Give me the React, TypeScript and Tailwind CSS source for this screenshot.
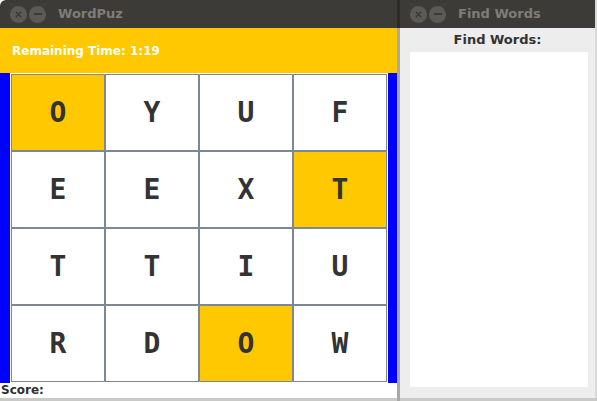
import React from "react";

const LETTERS = ["O", "Y", "U", "F", "E", "E", "X", "T", "T", "T", "I", "U", "R", "D", "O", "W"];
const PICKED = [0, 7, 14];

function TitleButtons() {
  return (
    <div className="flex items-center gap-[2px]">
      <div className="size-[17px] rounded-full bg-[#5b5a56] flex items-center justify-center">
        <svg width="7" height="7" viewBox="0 0 7 7">
          <path d="M1 1 L6 6 M6 1 L1 6" stroke="#3a3935" strokeWidth="1.5" />
        </svg>
      </div>
      <div className="size-[17px] rounded-full bg-[#5b5a56] flex items-center justify-center">
        <div className="w-[8px] h-[1.5px] bg-[#3a3935]" />
      </div>
    </div>
  );
}

function TitleBar({ title, rounded }: { title: string; rounded?: boolean }) {
  return (
    <div
      className={`h-[28px] shrink-0 bg-[#3c3b37] flex items-center pl-[10px] gap-[12px] ${rounded ? "rounded-tl-[6px]" : ""}`}
    >
      <TitleButtons />
      <span className="text-[13px] font-bold text-[#7f7d78] font-['DejaVu_Sans',sans-serif]">{title}</span>
    </div>
  );
}

export default function App() {
  return (
    <div className="w-[597px] h-[401px] overflow-hidden bg-[#c9c9c7] flex font-['DejaVu_Sans',sans-serif]">
      {/* main game window */}
      <div className="w-[397px] h-[398px] flex flex-col bg-white">
        <TitleBar title="WordPuz" rounded />
        <div className="h-[45px] bg-[#ffc800] flex items-center pl-[12px] text-white text-[12px] font-bold">
          Remaining Time: 1:19
        </div>
        <div className="h-[310px] flex">
          <div className="w-[10px] bg-[#0000ff]" />
          <div className="p-[1px] bg-white">
            <div className="grid grid-cols-4 w-[376px] h-[308px]">
              {LETTERS.map((l, i) => (
                <div
                  key={i}
                  className={`border border-[#7d8894] flex items-center justify-center text-[28px] font-bold text-[#333333] font-['DejaVu_Sans_Mono',monospace] ${
                    PICKED.includes(i) ? "bg-[#ffc800]" : "bg-white"
                  }`}
                >
                  {l}
                </div>
              ))}
            </div>
          </div>
          <div className="w-[9px] bg-[#0000ff]" />
        </div>
        <div className="h-[15px] pl-[1px] text-[12px] font-bold text-[#2e2e2e] leading-[15px]">Score:</div>
      </div>

      {/* separator */}
      <div className="w-[3px] flex flex-col">
        <div className="h-[28px] bg-[#2c2b28]" />
        <div className="flex-1 bg-[#a8a8a6]" />
      </div>

      {/* word list window */}
      <div className="w-[197px] h-[398px] flex flex-col bg-[#ededed] border-r-2 border-[#d9d9d9]">
        <TitleBar title="Find Words" />
        <div className="h-[24px] flex items-center justify-center text-[13px] font-bold text-[#333333]">
          Find Words:
        </div>
        <div className="ml-[10px] w-[178px] h-[335px] bg-white" />
      </div>
    </div>
  );
}
